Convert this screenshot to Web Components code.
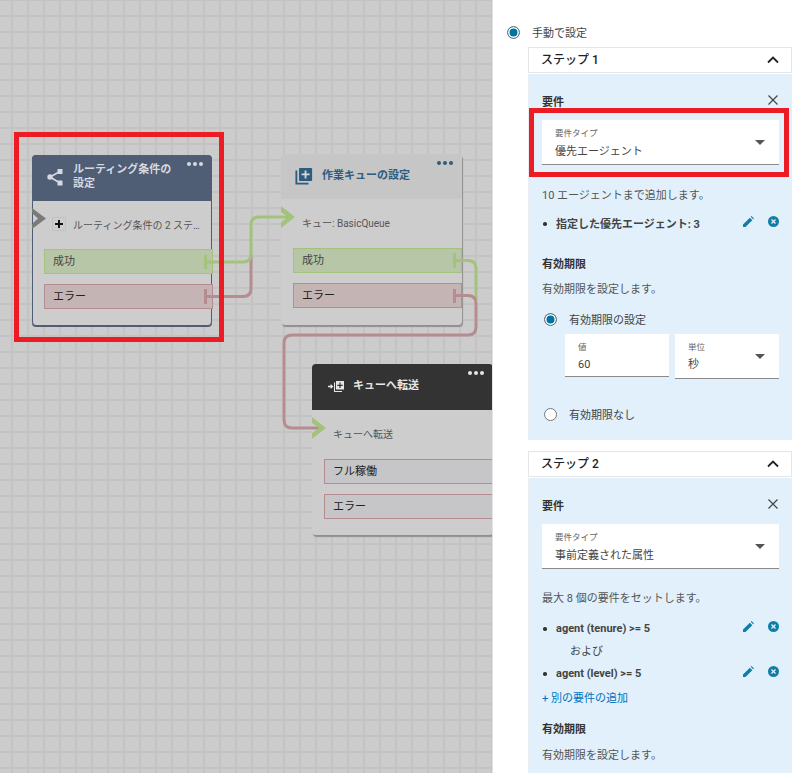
<!DOCTYPE html>
<html lang="ja">
<head>
<meta charset="utf-8">
<title>ルーティング条件</title>
<style>
    html, body { margin: 0; height: 100%; overflow: hidden; }
    body {
        display: flex;
        width: 797px;
        height: 773px;
        font-family: Roboto, "Noto Sans CJK JP", sans-serif;
    }
</style>
</head>
<body>

<flow-canvas>
    <flow-node kind="routing" style="left:32px;top:155px">
        <svg slot="icon" width="20" height="20" viewBox="0 0 20 20"><path d="M4 10 L14 4.5 M4 10 L14 16" stroke="#d5d9e0" stroke-width="1.6" fill="none"/><circle cx="4" cy="10" r="2.7" fill="#d5d9e0"/><rect x="11.5" y="2" width="5" height="5" fill="#d5d9e0"/><rect x="11.5" y="13.5" width="5" height="5" fill="#d5d9e0"/></svg>
        <span slot="title">ルーティング条件の設定</span>
        <node-line plus>ルーティング条件の 2 ステップ</node-line>
        <node-port type="ok">成功</node-port>
        <node-port type="err">エラー</node-port>
    </flow-node>

    <flow-node kind="queue" style="left:281px;top:154px">
        <svg slot="icon" width="18" height="18" viewBox="0 0 20 20" style="margin-right:2px"><path d="M1.5 4 V18.5 H15" stroke="#2c5c80" stroke-width="2" fill="none"/><rect x="4.5" y="1" width="14.5" height="14.5" rx="1" fill="#2c5c80"/><path d="M11.7 3.8 V12.7 M7.3 8.2 H16.2" stroke="#d8d8d8" stroke-width="2"/></svg>
        <span slot="title">作業キューの設定</span>
        <node-line style="margin-bottom:14px">キュー: BasicQueue</node-line>
        <node-port type="ok">成功</node-port>
        <node-port type="err">エラー</node-port>
    </flow-node>

    <flow-node kind="transfer" style="left:312px;top:364px">
        <svg slot="icon" width="20" height="20" viewBox="0 0 20 20"><path d="M2 10.5 H6 M4.6 8.8 L6.4 10.5 L4.6 12.2" stroke="#e6e6e6" stroke-width="1.3" fill="none"/><path d="M8.5 6.5 V15.5 H16" stroke="#e6e6e6" stroke-width="1.1" fill="none"/><rect x="10" y="5" width="8" height="8.5" fill="#e6e6e6"/><path d="M14 6.5 V12 M11.3 9.3 H16.7" stroke="#333" stroke-width="1.2"/></svg>
        <span slot="title">キューへ転送</span>
        <node-line style="margin-bottom:14px">キューへ転送</node-line>
        <node-port type="plain">フル稼働</node-port>
        <node-port type="plain">エラー</node-port>
    </flow-node>
</flow-canvas>

<side-panel>
    <radio-row checked>手動で設定</radio-row>

    <step-card title="ステップ 1">
        <req-head>要件</req-head>
        <red-frame>
            <pick-field label="要件タイプ" value="優先エージェント"></pick-field>
        </red-frame>
        <p-line style="margin-top:11px">10 エージェントまで追加します。</p-line>
        <req-item style="margin-top:9px">指定した優先エージェント: 3</req-item>
        <sec-title style="margin-top:24px">有効期限</sec-title>
        <p-line style="margin-top:9px">有効期限を設定します。</p-line>
        <radio-row checked nested style="margin-top:13px">有効期限の設定</radio-row>
        <div style="display:flex;gap:6px;margin:7px 0 0 23px;align-items:flex-start">
            <pick-field small plain label="値" value="60" style="flex:1"></pick-field>
            <pick-field small label="単位" value="秒" style="flex:1"></pick-field>
        </div>
        <radio-row nested style="margin-top:27px">有効期限なし</radio-row>
    </step-card>

    <step-card title="ステップ 2" style="margin-top:11px">
        <req-head>要件</req-head>
        <pick-field label="要件タイプ" value="事前定義された属性" style="margin-top:12px"></pick-field>
        <p-line style="margin-top:22px">最大 8 個の要件をセットします。</p-line>
        <req-item style="margin-top:11px">agent (tenure) &gt;= 5</req-item>
        <p-line style="margin:6px 0 0 28px;color:#444">および</p-line>
        <req-item style="margin-top:3px">agent (level) &gt;= 5</req-item>
        <p-line style="margin-top:8px;color:#0073bb">+ 別の要件の追加</p-line>
        <sec-title style="margin-top:15px">有効期限</sec-title>
        <p-line style="margin-top:10px">有効期限を設定します。</p-line>
    </step-card>
</side-panel>

<script>
class FlowCanvas extends HTMLElement {
    constructor(){
        super();
        this.attachShadow({mode: 'open'});
        this.shadowRoot.innerHTML = `
            <style>
                :host {
                    display: block;
                    position: relative;
                    flex: 0 0 492px;
                    height: 773px;
                    overflow: hidden;
                    background-color: #cccccc;
                    background-image:
                        linear-gradient(to right, #c3c3c3 2px, transparent 2px),
                        linear-gradient(to bottom, #c3c3c3 2px, transparent 2px);
                    background-size: 16px 16px;
                    background-position: 11px 15px;
                }
                svg { position: absolute; left: 0; top: 0; z-index: 2; pointer-events: none; }
                .frame {
                    position: absolute;
                    left: 14px;
                    top: 132px;
                    width: 200px;
                    height: 200px;
                    border: 5px solid #ed1c24;
                    z-index: 3;
                }
            </style>
            <slot></slot>
            <svg width="492" height="773" fill="none" stroke-width="3">
                <g stroke="#b58c90">
                    <path d="M205 296.5 H243 Q251 296.5 251 288.5 V255"/>
                    <path d="M205.5 289 V304"/>
                </g>
                <g stroke="#a3c27c">
                    <path d="M205 262 H243 Q251 262 251 254 V225 Q251 217 259 217 H290"/>
                    <path d="M454 260.5 H468 Q476 260.5 476 268.5 V300"/>
                    <path d="M205.5 255 V269 M454.5 253 V268"/>
                </g>
                <g stroke="#b58c90">
                    <path d="M454 295.5 H468 Q476 295.5 476 303.5 V327 Q476 335 468 335 H292 Q284 335 284 343 V420 Q284 428 292 428 H322"/>
                    <path d="M454.5 289 V303"/>
                </g>
                <g stroke-width="0">
                    <path d="M281 206 L295 217 L281 228 V222 L288 217 L281 212 Z" fill="#a3c27c"/>
                    <path d="M312 417 L326 428 L312 439 V433 L319 428 L312 423 Z" fill="#a3c27c"/>
                    <path d="M32 208 L46 218.5 L32 229 V224 L38 218.5 L32 213 Z" fill="#7a7a7a"/>
                </g>
            </svg>
            <div class="frame"></div>
        `;
    }
}

class FlowNode extends HTMLElement {
    constructor(){
        super();
        this.attachShadow({mode: 'open'});
        this.shadowRoot.innerHTML = `
            <style>
                :host {
                    display: flex;
                    flex-direction: column;
                    position: absolute;
                    box-sizing: border-box;
                    width: 181px;
                    height: 171px;
                    background: #cdcdcd;
                    border-radius: 4px;
                    box-shadow: 1px 2px 1px #8f8f8f;
                    color: #222;
                }
                :host([kind="routing"]) {
                    width: 180px;
                    border: 1px solid #4f5d75;
                    box-shadow: 0 1px 0 #4f5d75;
                }
                header {
                    box-sizing: border-box;
                    flex: 0 0 46px;
                    display: flex;
                    align-items: center;
                    gap: 7px;
                    padding: 0 30px 2px 14px;
                    border-radius: 4px 4px 0 0;
                    font-size: 11px;
                    font-weight: 700;
                    line-height: 14px;
                    position: relative;
                }
                :host([kind="routing"]) header { background: #4f5d75; color: #d5d9e0; margin: -1px -1px 0; }
                :host([kind="queue"]) header { background: #c6c6c6; color: #2c5c80; flex-basis: 45px; padding-bottom: 2px; }
                :host([kind="transfer"]) header { background: #333; color: #e6e6e6; }
                .dots { position: absolute; right: 9px; top: 7px; display: flex; gap: 2px; }
                .dots i { width: 4px; height: 4px; border-radius: 50%; background: currentColor; }
                main { padding: 11px 0 0 12px; }
                :host([kind="routing"]) main { padding-left: 11px; }
                ::slotted(svg) { flex: none; }
            </style>
            <header>
                <slot name="icon"></slot>
                <slot name="title"></slot>
                <div class="dots"><i></i><i></i><i></i></div>
            </header>
            <main><slot></slot></main>
        `;
    }
}

class NodeLine extends HTMLElement {
    constructor(){
        super();
        this.attachShadow({mode: 'open'});
        const plus = this.hasAttribute('plus');
        this.shadowRoot.innerHTML = `
            <style>
                :host {
                    display: flex;
                    align-items: center;
                    gap: 7px;
                    height: 24px;
                    margin: 0 0 13px 9px;
                    font-size: 10px;
                    color: #555;
                    min-width: 0;
                    width: 146px;
                }
                :host([plus]) { margin-left: 8px; width: 153px; }
                .plus {
                    flex: none;
                    box-sizing: border-box;
                    width: 14px; height: 14px;
                    border: 1px solid #c2c2c2;
                }
                .plus svg { display: block; }
                .txt { overflow: hidden; white-space: nowrap; text-overflow: ellipsis; }
            </style>
            ${plus ? '<span class="plus"><svg width="12" height="12" viewBox="0 0 12 12"><path d="M6 2 V10 M2 6 H10" stroke="#111" stroke-width="2"/></svg></span>' : ''}
            <span class="txt"><slot></slot></span>
        `;
    }
}

class NodePort extends HTMLElement {
    constructor(){
        super();
        this.attachShadow({mode: 'open'});
        this.shadowRoot.innerHTML = `
            <style>
                :host {
                    display: block;
                    box-sizing: border-box;
                    width: 169px;
                    height: 25px;
                    margin-bottom: 10px;
                    padding-left: 8px;
                    font-size: 11px;
                    line-height: 24px;
                    border: 1px solid;
                }
                :host([type="ok"]) { background: #b6c6a6; border-color: #a3c27c; color: #444; }
                :host([type="err"]) { background: #c4b4b4; border-color: #b58c90; }
                :host([type="plain"]) { background: #c6c6c8; border-color: #b58c90; }
            </style>
            <slot></slot>
        `;
    }
}

class SidePanel extends HTMLElement {
    constructor(){
        super();
        this.attachShadow({mode: 'open'});
        this.shadowRoot.innerHTML = `
            <style>
                :host {
                    display: block;
                    box-sizing: border-box;
                    flex: 1;
                    height: 773px;
                    overflow: hidden;
                    padding: 24px 5px 0 35px;
                    background: #fff;
                    border-left: 1px solid #e4e4e4;
                    color: #444;
                    font-size: 11px;
                }
            </style>
            <slot></slot>
        `;
    }
}

class RadioRow extends HTMLElement {
    constructor(){
        super();
        this.attachShadow({mode: 'open'});
        this.shadowRoot.innerHTML = `
            <style>
                :host {
                    display: flex;
                    align-items: center;
                    gap: 12px;
                    height: 16px;
                    margin-left: -21px;
                    margin-bottom: 7px;
                    font-size: 11px;
                    color: #444;
                }
                :host([nested]) { margin-left: 2px; margin-bottom: 0; }
                .dot {
                    box-sizing: border-box;
                    flex: none;
                    width: 13px; height: 13px;
                    border: 1px solid #777;
                    border-radius: 50%;
                    background: #fff;
                }
                :host([checked]) .dot { background: #0073a0; box-shadow: inset 0 0 0 1.5px #fff; }
            </style>
            <span class="dot"></span><slot></slot>
        `;
    }
}

class StepCard extends HTMLElement {
    constructor(){
        super();
        this.attachShadow({mode: 'open'});
        this.shadowRoot.innerHTML = `
            <style>
                :host { display: block; }
                header {
                    box-sizing: border-box;
                    height: 26px;
                    display: flex;
                    align-items: center;
                    justify-content: space-between;
                    padding: 0 12px;
                    border: 1px solid #e6e6e6;
                    background: #fff;
                    color: #222;
                    font-size: 12px;
                    font-weight: 500;
                }
                header span { margin-bottom: 4px; }
                main {
                    padding: 20px 12px 17px 13px;
                    margin-top: 1px;
                    background: #e1f0fb;
                    border: 1px solid #e8eef2;
                    border-top: 0;
                }
            </style>
            <header>
                <span>${this.getAttribute('title')}</span>
                <svg width="12" height="8" viewBox="0 0 12 8" fill="none" stroke="#222" stroke-width="1.8"><path d="M1 6.5 L6 1.5 L11 6.5"/></svg>
            </header>
            <main><slot></slot></main>
        `;
    }
}

class ReqHead extends HTMLElement {
    constructor(){
        super();
        this.attachShadow({mode: 'open'});
        this.shadowRoot.innerHTML = `
            <style>
                :host {
                    display: flex;
                    justify-content: space-between;
                    align-items: center;
                    height: 14px;
                    font-size: 11px;
                    font-weight: 700;
                    color: #333;
                }
            </style>
            <slot></slot>
            <svg style="margin:0 1px 3px 0" width="10" height="10" viewBox="0 0 10 10" fill="none" stroke="#444" stroke-width="1.2"><path d="M.5 .5 L9.5 9.5 M9.5 .5 L.5 9.5"/></svg>
        `;
    }
}

class RedFrame extends HTMLElement {
    constructor(){
        super();
        this.attachShadow({mode: 'open'});
        this.shadowRoot.innerHTML = `
            <style>
                :host {
                    display: block;
                    margin: 0 0 0 -13px;
                    padding: 7px 5px 7px 8px;
                    border: 5px solid #ed1c24;
                    width: 237px;
                }
            </style>
            <slot></slot>
        `;
    }
}

class PickField extends HTMLElement {
    constructor(){
        super();
        this.attachShadow({mode: 'open'});
        const arrow = this.hasAttribute('plain') ? '' : '<span class="arrow"></span>';
        this.shadowRoot.innerHTML = `
            <style>
                :host {
                    display: block;
                    position: relative;
                    box-sizing: border-box;
                    height: 45px;
                    padding: 7px 13px 0;
                    background: #fff;
                    border-bottom: 1px solid #8a8a8a;
                    color: #444;
                }
                :host([plain]) { height: 43px; }
                .label { font-size: 8.5px; line-height: 12px; color: #666; }
                .value { font-size: 11px; line-height: 18px; margin-top: 4px; }
                :host([small]) .value { margin-top: 3px; }
                .arrow {
                    position: absolute; right: 14px; top: 20px;
                    border: 5px solid transparent; border-top: 5px solid #555; border-bottom: 0;
                }
            </style>
            <div class="label">${this.getAttribute('label')}</div>
            <div class="value">${this.getAttribute('value')}</div>
            ${arrow}
        `;
    }
}

class PLine extends HTMLElement {
    constructor(){
        super();
        this.attachShadow({mode: 'open'});
        this.shadowRoot.innerHTML = `
            <style>
                :host { display: block; font-size: 11px; line-height: 16px; color: #555; }
            </style>
            <slot></slot>
        `;
    }
}

class SecTitle extends HTMLElement {
    constructor(){
        super();
        this.attachShadow({mode: 'open'});
        this.shadowRoot.innerHTML = `
            <style>
                :host { display: block; font-size: 11px; line-height: 16px; font-weight: 700; color: #333; }
            </style>
            <slot></slot>
        `;
    }
}

class ReqItem extends HTMLElement {
    constructor(){
        super();
        this.attachShadow({mode: 'open'});
        this.shadowRoot.innerHTML = `
            <style>
                :host {
                    display: flex;
                    align-items: center;
                    height: 20px;
                    font-size: 11px;
                    font-weight: 700;
                    color: #444;
                }
                .b { width: 3.5px; height: 3.5px; border-radius: 50%; background: #333; margin: 2px 9.5px 0 1px; }
                .t { flex: 1; }
                .ic { display: flex; gap: 14px; margin: -3px 0 0; }
            </style>
            <span class="b"></span>
            <span class="t"><slot></slot></span>
            <span class="ic">
                <svg width="11" height="11" viewBox="0 0 12 12"><path d="M0 12 V9.3 L7.5 1.8 L10.2 4.5 L2.7 12 Z M8.4 .9 L9.3 0 L12 2.7 L11.1 3.6 Z" fill="#0f7fa8"/></svg>
                <svg width="11" height="11" viewBox="0 0 12 12"><circle cx="6" cy="6" r="6" fill="#0f7fa8"/><path d="M3.8 3.8 L8.2 8.2 M8.2 3.8 L3.8 8.2" stroke="#e1f0fb" stroke-width="1.4"/></svg>
            </span>
        `;
    }
}

customElements.define('flow-canvas', FlowCanvas);
customElements.define('flow-node', FlowNode);
customElements.define('node-line', NodeLine);
customElements.define('node-port', NodePort);
customElements.define('side-panel', SidePanel);
customElements.define('radio-row', RadioRow);
customElements.define('step-card', StepCard);
customElements.define('req-head', ReqHead);
customElements.define('red-frame', RedFrame);
customElements.define('pick-field', PickField);
customElements.define('p-line', PLine);
customElements.define('sec-title', SecTitle);
customElements.define('req-item', ReqItem);
</script>
</body>
</html>
